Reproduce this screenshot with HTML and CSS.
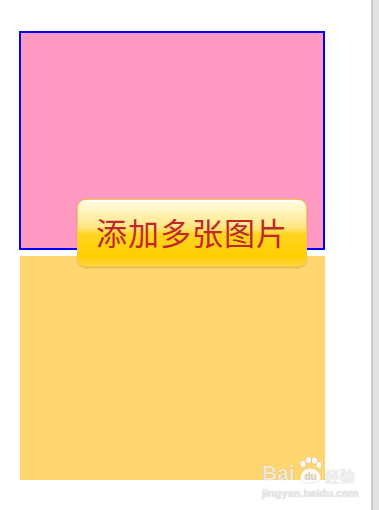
FILE: index.html
```html
<!DOCTYPE html>
<html>
<head>
<meta charset="utf-8">
<link rel="stylesheet" href="styles.css">
</head>
<body>
<div class="page">
  <main class="canvas">
    <div class="pink"></div>
    <div class="yellow"></div>
    <button class="add-btn">添加多张图片</button>
    <div class="watermark">
      <div class="wm-top">
        <span class="wm-bai">Bai</span>
        <span class="wm-paw">
          <svg width="30" height="30" viewBox="0 0 30 30">
            <g fill="rgba(255,255,255,0.85)" stroke="rgba(0,0,0,0.12)" stroke-width="0.8">
              <ellipse cx="8" cy="9" rx="3" ry="3.6"/>
              <ellipse cx="13.5" cy="5" rx="3" ry="3.6"/>
              <ellipse cx="19.5" cy="5.5" rx="3" ry="3.6"/>
              <ellipse cx="24" cy="10" rx="2.8" ry="3.4"/>
              <path d="M5 22 C6 16 11 13 15 13 C20 13 25 16 26 22 C26.5 26 23 28 15 28 C7 28 4.5 26 5 22 Z"/>
            </g>
            <text x="15.5" y="25" text-anchor="middle" font-family="Liberation Sans, sans-serif" font-weight="bold" font-size="10" fill="rgba(200,200,200,0.6)">du</text>
          </svg>
        </span>
        <span class="wm-cn">经验</span>
      </div>
      <div class="wm-url">jingyan.baidu.com</div>
    </div>
  </main>
  <div class="scrollbar"></div>
</div>
</body>
</html>
```
FILE: styles.css
```css
html, body {
  margin: 0;
  padding: 0;
  background: #ffffff;
}
.page {
  display: flex;
  width: 379px;
  height: 510px;
  overflow: hidden;
}
.canvas {
  position: relative;
  flex: 1;
  display: flex;
  flex-direction: column;
  padding-top: 31px;
}
.pink {
  margin-left: 19px;
  width: 302px;
  height: 215px;
  border: 2px solid #0000ff;
  background: #ff99c1;
}
.yellow {
  margin-left: 20px;
  margin-top: 6px;
  width: 305px;
  height: 224px;
  background: #ffd66f;
}
.add-btn {
  position: absolute;
  left: 77px;
  top: 199px;
  width: 230px;
  height: 68px;
  border: 1px solid #f0c850;
  border-radius: 9px;
  background: linear-gradient(to bottom, #fffbe6 0%, #fff2b8 20%, #ffe57e 42%, #ffd520 52%, #ffcd00 85%, #ffd640 100%);
  box-shadow: 0 1px 2px rgba(160,120,0,0.35), inset 0 1px 0 rgba(255,255,255,0.9);
  color: #be2a2c;
  font-family: "Noto Sans CJK SC", sans-serif;
  font-size: 31px;
  line-height: 1;
  padding: 0 0 4px 0;
  display: flex;
  align-items: center;
  justify-content: center;
  letter-spacing: 1px;
}
.watermark {
  position: absolute;
  left: 262px;
  top: 454px;
  display: flex;
  flex-direction: column;
  color: rgba(255,255,255,0.75);
  text-shadow: 0 0 1px rgba(0,0,0,0.25);
}
.wm-top {
  display: flex;
  align-items: flex-end;
  height: 31px;
}
.wm-bai {
  font-family: "Liberation Sans", sans-serif;
  font-weight: bold;
  font-size: 21px;
  line-height: 1;
  margin-bottom: 2px;
}
.wm-paw {
  display: block;
  height: 30px;
}
.wm-paw svg {
  display: block;
}
.wm-cn {
  font-family: "Noto Sans CJK SC", sans-serif;
  font-weight: bold;
  font-size: 15px;
  line-height: 1;
  margin-bottom: 2px;
}
.wm-url {
  font-family: "Liberation Sans", sans-serif;
  font-weight: bold;
  font-size: 11px;
  line-height: 1;
  margin-top: 3px;
  color: rgba(240,240,240,0.8);
}
.scrollbar {
  width: 6px;
  height: 510px;
  background: #e2e2e2;
  border-left: 2px solid #c9c9c9;
}
```
